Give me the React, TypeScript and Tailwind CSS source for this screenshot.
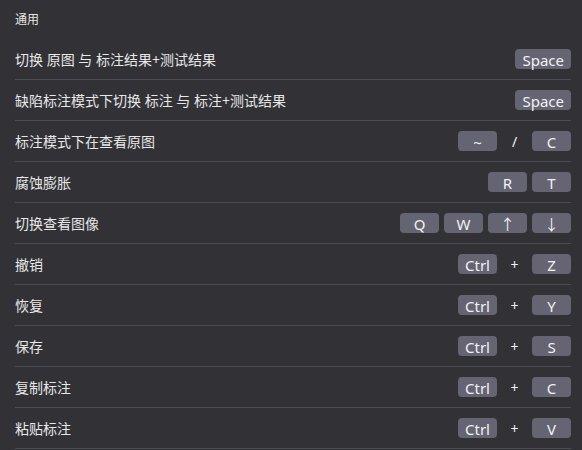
import React from "react";

type Shortcut = {
  label: string;
  keys: string[];
  sep?: string;
};

const shortcuts: Shortcut[] = [
  { label: "切换 原图 与 标注结果+测试结果", keys: ["Space"] },
  { label: "缺陷标注模式下切换 标注 与 标注+测试结果", keys: ["Space"] },
  { label: "标注模式下在查看原图", keys: ["~", "C"], sep: "/" },
  { label: "腐蚀膨胀", keys: ["R", "T"] },
  { label: "切换查看图像", keys: ["Q", "W", "↑", "↓"] },
  { label: "撤销", keys: ["Ctrl", "Z"], sep: "+" },
  { label: "恢复", keys: ["Ctrl", "Y"], sep: "+" },
  { label: "保存", keys: ["Ctrl", "S"], sep: "+" },
  { label: "复制标注", keys: ["Ctrl", "C"], sep: "+" },
  { label: "粘贴标注", keys: ["Ctrl", "V"], sep: "+" },
];

function Key({ k }: { k: string }) {
  return (
    <span className="h-5 min-w-[39px] px-[7px] pt-px rounded-[4px] bg-[#646472] text-[#f2f2f2] text-[15px] leading-5 flex items-center justify-center">
      {k}
    </span>
  );
}

export default function App() {
  return (
    <div
      className="w-[582px] h-[450px] overflow-hidden bg-[#313136] text-[#e8e8e8]"
      style={{ fontFamily: '"Noto Sans", "Noto Sans CJK SC", sans-serif' }}
    >
      <div className="h-[39px] pl-[15px] flex items-center text-[12px]">通用</div>
      {shortcuts.map((s) => (
        <div
          key={s.label}
          className="ml-[15px] mr-[11px] h-[41px] border-b border-[#4b4b52] flex items-center justify-between text-[14px]"
        >
          <span>{s.label}</span>
          <div className="flex items-center gap-[5px]">
            {s.sep ? (
              <>
                <Key k={s.keys[0]} />
                <span className="w-[25px] text-center text-[#f2f2f2] text-[14px]">{s.sep}</span>
                <Key k={s.keys[1]} />
              </>
            ) : (
              s.keys.map((k) => <Key key={k} k={k} />)
            )}
          </div>
        </div>
      ))}
    </div>
  );
}
